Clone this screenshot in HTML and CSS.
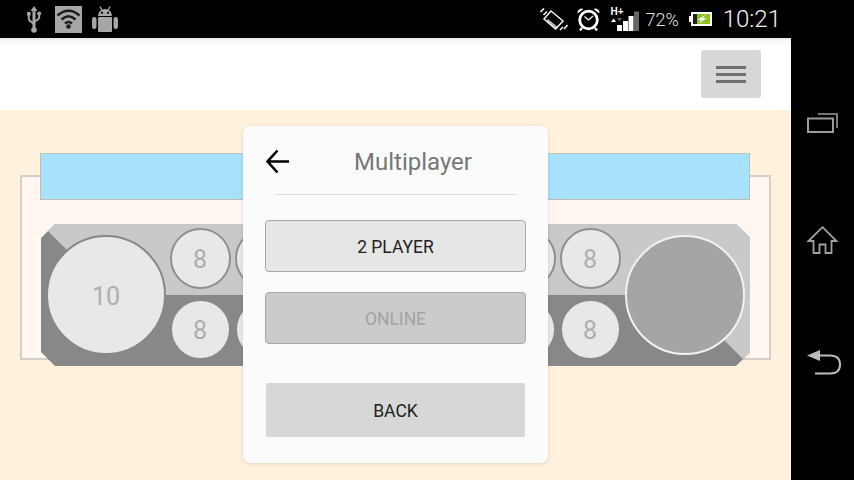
FILE: index.html
```html
<!DOCTYPE html>
<html lang="en">
<head>
<meta charset="utf-8">
<title>Multiplayer</title>
<link rel="stylesheet" href="styles.css">
</head>
<body>
<div class="status">
  <div class="status-left">
    <svg class="i-usb" width="16" height="27" viewBox="0 0 16 27"><path d="M8 0 11.500 5H9.500V22H6.500V5H4.500Z" fill="#a6a6a6"/><path d="M2.800 9v3.500q0 2 2 3l3.200 2.500M13.200 9v2q0 2-2 3l-3.200 2" fill="none" stroke="#a6a6a6" stroke-width="2"/><rect x="1" y="6" width="3.600" height="3.600" fill="#a6a6a6"/><circle cx="13.200" cy="7.500" r="2" fill="#a6a6a6"/><circle cx="8" cy="24" r="2.800" fill="#a6a6a6"/></svg>
    <svg class="i-wifi" width="27" height="27" viewBox="0 0 27 27"><rect width="27" height="27" fill="#a6a6a6"/><path d="M2.500 9.500Q13.500 0 24.500 9.500M6.500 13.500Q13.500 7 20.500 13.500M10 17.500Q13.500 14.500 17 17.500" fill="none" stroke="#1c1c1c" stroke-width="2.600"/><circle cx="13.500" cy="20.500" r="2.300" fill="#1c1c1c"/></svg>
    <svg class="i-droid" width="26" height="26" viewBox="0 0 26 26"><path d="M6 10a7 7 0 0 1 14 0Z" fill="#a6a6a6"/><path d="M8 0.500l2 4M18 0.500l-2 4" stroke="#a6a6a6" stroke-width="1.300"/><circle cx="10" cy="6.800" r="1.100" fill="#000"/><circle cx="16" cy="6.800" r="1.100" fill="#000"/><rect x="6" y="11" width="14" height="15" rx="1" fill="#a6a6a6"/><rect x="0" y="11" width="4.500" height="12" rx="2.200" fill="#a6a6a6"/><rect x="21.500" y="11" width="4.500" height="12" rx="2.200" fill="#a6a6a6"/></svg>
  </div>
  <div class="status-right">
    <svg class="i-rot" width="28" height="23" viewBox="0 0 28 23"><path d="M11 3 23 13 15.500 21 4 11Z" fill="none" stroke="#f2f2f2" stroke-width="1.500"/><path d="M6 13 8 11 18.500 19.500 16 21.500Z" fill="#f2f2f2" opacity=".75"/><path d="M0.500 4 4 0.500M3.500 7 7 3.500M20 22l3-3M24 21l3.500-4" stroke="#f2f2f2" stroke-width="1.600"/></svg>
    <svg class="i-clock" width="23" height="24" viewBox="0 0 23 24"><circle cx="11.500" cy="13" r="8.800" fill="none" stroke="#fff" stroke-width="2.800"/><path d="M11.500 13 7.500 9.500M11.500 13l4.500-4" stroke="#fff" stroke-width="1.200" fill="none"/><path d="M0.500 6.500a4.200 4.200 0 0 1 6-4.500ZM22.500 6.500a4.200 4.200 0 0 0-6-4.500Z" fill="#fff"/><path d="M5 21l-2 2.500M18 21l2 2.500" stroke="#fff" stroke-width="2.200"/></svg>
    <div class="signal">
      <span class="hplus">H+</span>
      <svg width="29" height="23" viewBox="0 0 29 23"><path d="M1 14 3.500 10.500 6 14Z" fill="#fff"/><path d="M7 10 9.500 13.500 12 10Z" fill="#666"/><rect x="7" y="17" width="5" height="6" fill="#fff"/><rect x="13" y="13" width="5" height="10" fill="#fff"/><rect x="18.500" y="8" width="5" height="15" fill="#fff"/><rect x="24" y="3.500" width="5" height="19.500" fill="#666"/></svg>
    </div>
    <span class="pct">72%</span>
    <svg class="i-batt" width="23" height="14" viewBox="0 0 23 14"><rect x="0" y="4" width="2" height="6" fill="#fff"/><rect x="3" y="1" width="19" height="12" fill="#222" stroke="#fff" stroke-width="2"/><rect x="8" y="2" width="13" height="10" fill="#8cc320"/><path d="M17 2.500 8 8h4l-2 3.500 8-5.500h-4Z" fill="#f4f4f4"/></svg>
    <span class="clock">10:21</span>
  </div>
</div>
<div class="screen">
  <div class="app">
    <header class="topbar">
      <button class="menu" type="button" aria-label="Menu"><span></span><span></span><span></span></button>
    </header>
    <main class="stage">
      <div class="frame"></div>
      <div class="blue"></div>
      <div class="board">
        <svg class="board-bg" width="709" height="142" viewBox="0 0 709 142">
          <path d="M0 14 14 0H695L709 14V128L695 142H14L0 128Z" fill="#888888"/>
          <path d="M7 7 14 0H695L709 14V128L702 135 638 71H71Z" fill="#c9c9c9"/>
        </svg>
        <div class="pit big">10</div>
        <div class="pit top c1">8</div><div class="pit top c2">8</div><div class="pit top c6">8</div><div class="pit top c7">8</div>
        <div class="pit bottom c1">8</div><div class="pit bottom c2">8</div><div class="pit bottom c6">8</div><div class="pit bottom c7">8</div>
        <div class="store"></div>
      </div>
      <section class="dialog">
        <div class="dialog-head">
          <svg class="back-arrow" width="26" height="26" viewBox="0 0 26 26"><path d="M24 12.500H3M12.500 1.500 2.500 12.500 12.500 23.500" fill="none" stroke="#000" stroke-width="2.600"/></svg>
          <h1>Multiplayer</h1>
        </div>
        <div class="rule"></div>
        <button class="btn" type="button">2 PLAYER</button>
        <button class="btn off" type="button">ONLINE</button>
        <button class="btn back" type="button">BACK</button>
      </section>
    </main>
  </div>
  <nav class="nav">
    <svg width="31" height="20" viewBox="0 0 31 20"><rect x="1" y="5.500" width="25" height="13.500" fill="none" stroke="#9a9a9a" stroke-width="2"/><path d="M11 1H30V15" fill="none" stroke="#9a9a9a" stroke-width="1.600"/></svg>
    <svg width="31" height="28" viewBox="0 0 31 28"><path d="M1.500 15 15.500 1.200 29.500 15H24.500V27H18.500V18.500H12.500V27H6.500V15Z" fill="none" stroke="#a0a0a0" stroke-width="1.800"/></svg>
    <svg width="36" height="25" viewBox="0 0 36 25"><path d="M0 5.500 13 0V11Z" fill="#bdbdbd"/><path d="M13 5.500H23Q33 5.500 33 14.500T23 23.500H8" fill="none" stroke="#bdbdbd" stroke-width="2"/></svg>
  </nav>
</div>
</body>
</html>
```
FILE: styles.css
```css
* { box-sizing: border-box; }
html, body { margin: 0; padding: 0; }
body {
  width: 854px;
  height: 480px;
  overflow: hidden;
  background: #000;
  font-family: Roboto, "Liberation Sans", sans-serif;
}
.status {
  height: 38px;
  background: #000;
  display: flex;
  justify-content: space-between;
  align-items: center;
}
.status-left {
  display: flex;
  align-items: center;
  padding-left: 26px;
}
.i-usb { margin-right: 13px; }
.i-wifi { margin-right: 10px; }
.status-right {
  display: flex;
  align-items: center;
  padding-right: 73px;
  color: #f2f2f2;
}
.i-rot { margin-right: 9px; }
.i-clock { margin-right: 10px; }
.signal {
  position: relative;
  width: 29px;
  height: 23px;
  margin-right: 6px;
}
.signal svg { display: block; }
.hplus {
  position: absolute;
  left: 0;
  top: -2px;
  font: bold 10px/12px "Liberation Sans", sans-serif;
  color: #fff;
}
.pct { font-size: 18px; font-weight: 300; color: #e4e4e4; margin-right: 10px; }
.i-batt { margin-right: 11px; }
.clock { font-size: 24px; font-weight: 300; color: #f4f4f4; }

.screen { display: flex; height: 442px; }
.app { width: 791px; display: flex; flex-direction: column; }
.topbar {
  height: 72px;
  background: linear-gradient(#e6e6e6 0, #f8f8f8 3px, #fff 8px);
  display: flex;
  justify-content: flex-end;
  padding: 12px 30px 0 0;
}
.menu {
  width: 60px;
  height: 48px;
  border: 0;
  border-radius: 3px;
  background: #d6d8d7;
  padding: 0;
  display: flex;
  flex-direction: column;
  align-items: center;
  justify-content: center;
  gap: 4px;
}
.menu span { width: 30px; height: 3px; background: #707070; }
.stage {
  position: relative;
  flex: 1;
  background: #fff1dc;
  padding: 43px 0 0 41px;
}
.frame {
  position: absolute;
  left: 20px;
  top: 65px;
  width: 751px;
  height: 185px;
  background: #fff7f0;
  border: 2px solid #d4cfc9;
}
.blue {
  position: relative;
  width: 710px;
  height: 47px;
  margin-left: -1px;
  background: #a8e1fb;
  border: 1px solid #bcbcb8;
  border-top-color: #c8c4bc;
}
.board {
  position: relative;
  width: 709px;
  height: 142px;
  margin-top: 24px;
  padding-left: 5px;
  display: grid;
  grid-template-columns: 121.500px repeat(7, 65px) 127.500px;
  grid-template-rows: 71px 71px;
}
.board-bg { position: absolute; left: 0; top: 0; }
.pit {
  position: relative;
  border-radius: 50%;
  background: #e8e8e8;
  border: 2px solid #8f8f8f;
  color: #aeaeae;
  font-size: 25px;
  display: flex;
  align-items: center;
  justify-content: center;
}
.big {
  grid-column: 1;
  grid-row: 1 / 3;
  width: 120px;
  height: 120px;
  align-self: center;
  padding-top: 2px;
  border-color: #888;
}
.top, .bottom {
  width: 61px;
  height: 61px;
  justify-self: center;
  padding-top: 2px;
}
.top { grid-row: 1; align-self: start; margin-top: 4px; }
.bottom { grid-row: 2; align-self: end; margin-bottom: 6px; border-color: #888; }
.c1 { grid-column: 2; }
.c2 { grid-column: 3; }
.c6 { grid-column: 7; }
.c7 { grid-column: 8; }
.store {
  position: relative;
  grid-column: 9;
  grid-row: 1 / 3;
  justify-self: end;
  align-self: center;
  margin-right: 5px;
  width: 120px;
  height: 120px;
  border-radius: 50%;
  background: #a5a5a5;
  border: 2px solid #f2f2f2;
}
.dialog {
  position: absolute;
  left: 243px;
  top: 16px;
  width: 305px;
  height: 337px;
  background: #fbfbfb;
  border-radius: 7px;
  box-shadow: 0 1px 4px rgba(0, 0, 0, .12);
  padding: 0 22px;
  display: flex;
  flex-direction: column;
}
.dialog-head {
  position: relative;
  height: 68px;
  padding-top: 3px;
  display: flex;
  align-items: center;
  justify-content: center;
}
.back-arrow { position: absolute; left: 0; top: 23px; }
.dialog-head h1 {
  margin: 0 0 0 35px;
  font-size: 24px;
  font-weight: 400;
  color: #777;
}
.rule {
  width: 241px;
  height: 1px;
  margin-left: 10px;
  background: #dcdcdc;
}
.btn {
  width: 261px;
  height: 52px;
  margin-top: 25px;
  padding: 2px 0 0;
  font: 400 17.500px Roboto, "Liberation Sans", sans-serif;
  color: #222;
  background: #e6e6e6;
  border: 1px solid #a8a8a8;
  border-radius: 4px;
}
.btn.off {
  margin-top: 20px;
  color: #a3a3a3;
  background: #cbcbcb;
}
.btn.back {
  width: 259px;
  height: 54px;
  margin: 39px 0 0 1px;
  background: #d6d8d7;
  border: 0;
  border-radius: 2px;
}
.nav {
  width: 63px;
  padding-top: 75px;
  display: flex;
  flex-direction: column;
  align-items: center;
  background: #000;
}
.nav svg { display: block; }
.nav svg:nth-child(2) { margin-top: 93px; }
.nav svg:nth-child(3) { margin: 96px 0 0 5px; }
```
